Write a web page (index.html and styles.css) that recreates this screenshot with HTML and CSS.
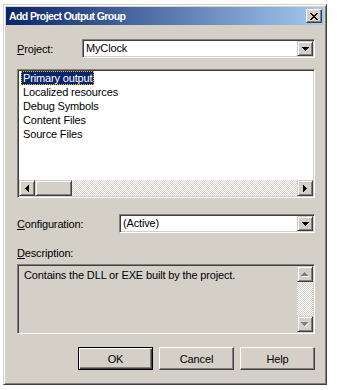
FILE: index.html
```html
<!DOCTYPE html>
<html lang="en">
<head>
  <meta charset="UTF-8">
  <title>Add Project Output Group</title>
  <link rel="stylesheet" href="styles.css">
</head>
<body>
  <div class="window">
    <!-- Title bar -->
    <div class="titlebar">
      <span class="title">Add Project Output Group</span>
      <span class="close-btn">
        <svg width="8" height="7" viewBox="0 0 8 7" shape-rendering="crispEdges">
          <path d="M0 0h2v1h-2zM6 0h2v1h-2zM1 1h2v1h-2zM5 1h2v1h-2zM2 2h4v1h-4zM3 3h2v1h-2zM2 4h4v1h-4zM1 5h2v1h-2zM5 5h2v1h-2zM0 6h2v1h-2zM6 6h2v1h-2z" fill="#000"/>
        </svg>
      </span>
    </div>

    <div class="content">
      <!-- Project -->
      <div class="row">
        <label class="label project-label"><u>P</u>roject:</label>
        <div class="combo">
          <span class="combo-text">MyClock</span>
          <span class="drop-btn">
            <svg width="7" height="4" viewBox="0 0 7 4" shape-rendering="crispEdges"><path d="M0 0h7v1h-7zM1 1h5v1h-5zM2 2h3v1h-3zM3 3h1v1h-1z" fill="#000"/></svg>
          </span>
        </div>
      </div>

      <!-- Output list -->
      <div class="listbox">
        <ul class="items">
          <li><span class="selected">Primary output</span></li>
          <li><span>Localized resources</span></li>
          <li><span>Debug Symbols</span></li>
          <li><span>Content Files</span></li>
          <li><span>Source Files</span></li>
        </ul>
        <div class="hscroll">
          <span class="sb-btn">
            <svg width="4" height="7" viewBox="0 0 4 7" shape-rendering="crispEdges"><path d="M3 0h1v7h-1zM2 1h1v5h-1zM1 2h1v3h-1zM0 3h1v1h-1z" fill="#000"/></svg>
          </span>
          <span class="sb-thumb"></span>
          <span class="sb-track"></span>
          <span class="sb-btn">
            <svg width="4" height="7" viewBox="0 0 4 7" shape-rendering="crispEdges"><path d="M0 0h1v7h-1zM1 1h1v5h-1zM2 2h1v3h-1zM3 3h1v1h-1z" fill="#000"/></svg>
          </span>
        </div>
      </div>

      <!-- Configuration -->
      <div class="row config-row">
        <label class="label config-label"><u>C</u>onfiguration:</label>
        <div class="combo">
          <span class="combo-text">(Active)</span>
          <span class="drop-btn">
            <svg width="7" height="4" viewBox="0 0 7 4" shape-rendering="crispEdges"><path d="M0 0h7v1h-7zM1 1h5v1h-5zM2 2h3v1h-3zM3 3h1v1h-1z" fill="#000"/></svg>
          </span>
        </div>
      </div>

      <!-- Description -->
      <div class="desc-label"><u>D</u>escription:</div>
      <div class="descbox">
        <p class="desc-text">Contains the DLL or EXE built by the project.</p>
        <div class="vscroll">
          <span class="sb-btn">
            <svg width="8" height="5" viewBox="0 0 8 5" shape-rendering="crispEdges"><path d="M4 1h1v1h-1zM5 2h1v1h-1zM6 3h1v1h-1zM7 4h1v1h-1zM1 4h6v1h-6z" fill="#fff"/><path d="M3 0h1v1h-1zM2 1h3v1h-3zM1 2h5v1h-5zM0 3h7v1h-7z" fill="#808080"/></svg>
          </span>
          <span class="sb-track"></span>
          <span class="sb-btn">
            <svg width="8" height="5" viewBox="0 0 8 5" shape-rendering="crispEdges"><path d="M7 1h1v1h-1zM6 2h1v1h-1zM5 3h1v1h-1zM4 4h1v1h-1z" fill="#fff"/><path d="M0 0h7v1h-7zM1 1h5v1h-5zM2 2h3v1h-3zM3 3h1v1h-1z" fill="#808080"/></svg>
          </span>
        </div>
      </div>

      <!-- Buttons -->
      <div class="buttons">
        <button class="btn btn-default">OK</button>
        <button class="btn">Cancel</button>
        <button class="btn">Help</button>
      </div>
    </div>
  </div>
</body>
</html>
```

FILE: styles.css
```css
/* Reset & Global */
* { margin: 0; padding: 0; box-sizing: border-box; }
body {
  background: #fff;
  font-family: 'Liberation Sans', Arial, sans-serif;
  font-size: 11px;
  letter-spacing: -0.15px;
  color: #000;
}
u { text-decoration: underline; }

/* Dialog frame */
.window {
  margin: 4px 0 0 3px;
  width: 324px;
  height: 381px;
  padding: 2px;
  background: #D4D0C8;
  border: 1px solid;
  border-color: #D4D0C8 #404040 #404040 #D4D0C8;
  box-shadow: inset 1px 1px #fff, inset -1px -1px #808080;
}

/* Title bar */
.titlebar {
  height: 18px;
  display: flex;
  align-items: center;
  justify-content: space-between;
  padding: 0 2px 0 3px;
  background: linear-gradient(to right, #0A246A, #A6CAF0);
}
.title {
  color: #fff;
  font-weight: bold;
  font-size: 10.5px;
  letter-spacing: -0.6px;
}
.close-btn {
  width: 16px;
  height: 14px;
  display: flex;
  align-items: center;
  justify-content: center;
  background: #D4D0C8;
  border: 1px solid;
  border-color: #fff #404040 #404040 #fff;
  box-shadow: inset -1px -1px #808080;
}

/* Content */
.content {
  padding: 14px 9px 0 11px;
}
.row {
  display: flex;
  align-items: center;
  height: 19px;
}
.label { flex: none; }
.project-label { width: 65px; }
.config-label { width: 102px; }

/* Sunken field */
.combo, .listbox, .descbox {
  border: 1px solid;
  border-color: #808080 #fff #fff #808080;
  box-shadow: inset 1px 1px #404040, inset -1px -1px #D4D0C8;
  padding: 1px;
}
.combo {
  flex: 1;
  height: 19px;
  display: flex;
  align-items: stretch;
  background: #fff;
}
.combo-text {
  flex: 1;
  padding-left: 2px;
  line-height: 15px;
}
.drop-btn, .sb-btn {
  flex: none;
  width: 16px;
  display: flex;
  align-items: center;
  justify-content: center;
  background: #D4D0C8;
  border: 1px solid;
  border-color: #D4D0C8 #404040 #404040 #D4D0C8;
  box-shadow: inset 1px 1px #fff, inset -1px -1px #808080;
}

/* List box */
.listbox {
  margin-top: 11px;
  height: 129px;
  background: #fff;
  display: flex;
  flex-direction: column;
}
.items {
  flex: 1;
  list-style: none;
  padding: 0 0 0 2px;
}
.items li { line-height: 14px; }
.items li span { padding: 0 2px; display: inline-block; }
.items li .selected {
  background: #0A246A;
  color: #fff;
  outline: 1px dotted #E8C000;
  outline-offset: -1px;
}

/* Scroll bars */
.hscroll {
  height: 16px;
  display: flex;
}
.sb-thumb {
  width: 37px;
  background: #D4D0C8;
  border: 1px solid;
  border-color: #D4D0C8 #404040 #404040 #D4D0C8;
  box-shadow: inset 1px 1px #fff, inset -1px -1px #808080;
}
.sb-track {
  flex: 1;
  background: repeating-conic-gradient(#D4D0C8 0 25%, #fff 0 50%) 0 0 / 2px 2px;
}

/* Configuration */
.config-row { margin-top: 16px; }

/* Description */
.desc-label {
  margin-top: 14px;
  line-height: 13px;
}
.descbox {
  margin-top: 4px;
  height: 70px;
  display: flex;
  background: #D4D0C8;
}
.desc-text {
  flex: 1;
  padding: 2px 0 0 5px;
  line-height: 14px;
}
.vscroll {
  width: 16px;
  display: flex;
  flex-direction: column;
}
.vscroll .sb-btn { height: 16px; }

/* Buttons */
.buttons {
  margin-top: 13px;
  display: flex;
  justify-content: flex-end;
  gap: 6px;
}
.btn {
  width: 75px;
  height: 23px;
  font-family: inherit;
  font-size: 11px;
  letter-spacing: inherit;
  color: #000;
  background: #D4D0C8;
  border: 1px solid;
  border-color: #fff #404040 #404040 #fff;
  box-shadow: inset -1px -1px #808080;
}
.btn-default {
  border-color: #000;
  box-shadow: inset 1px 1px #fff, inset -1px -1px #404040, inset -2px -2px #808080;
}
```
